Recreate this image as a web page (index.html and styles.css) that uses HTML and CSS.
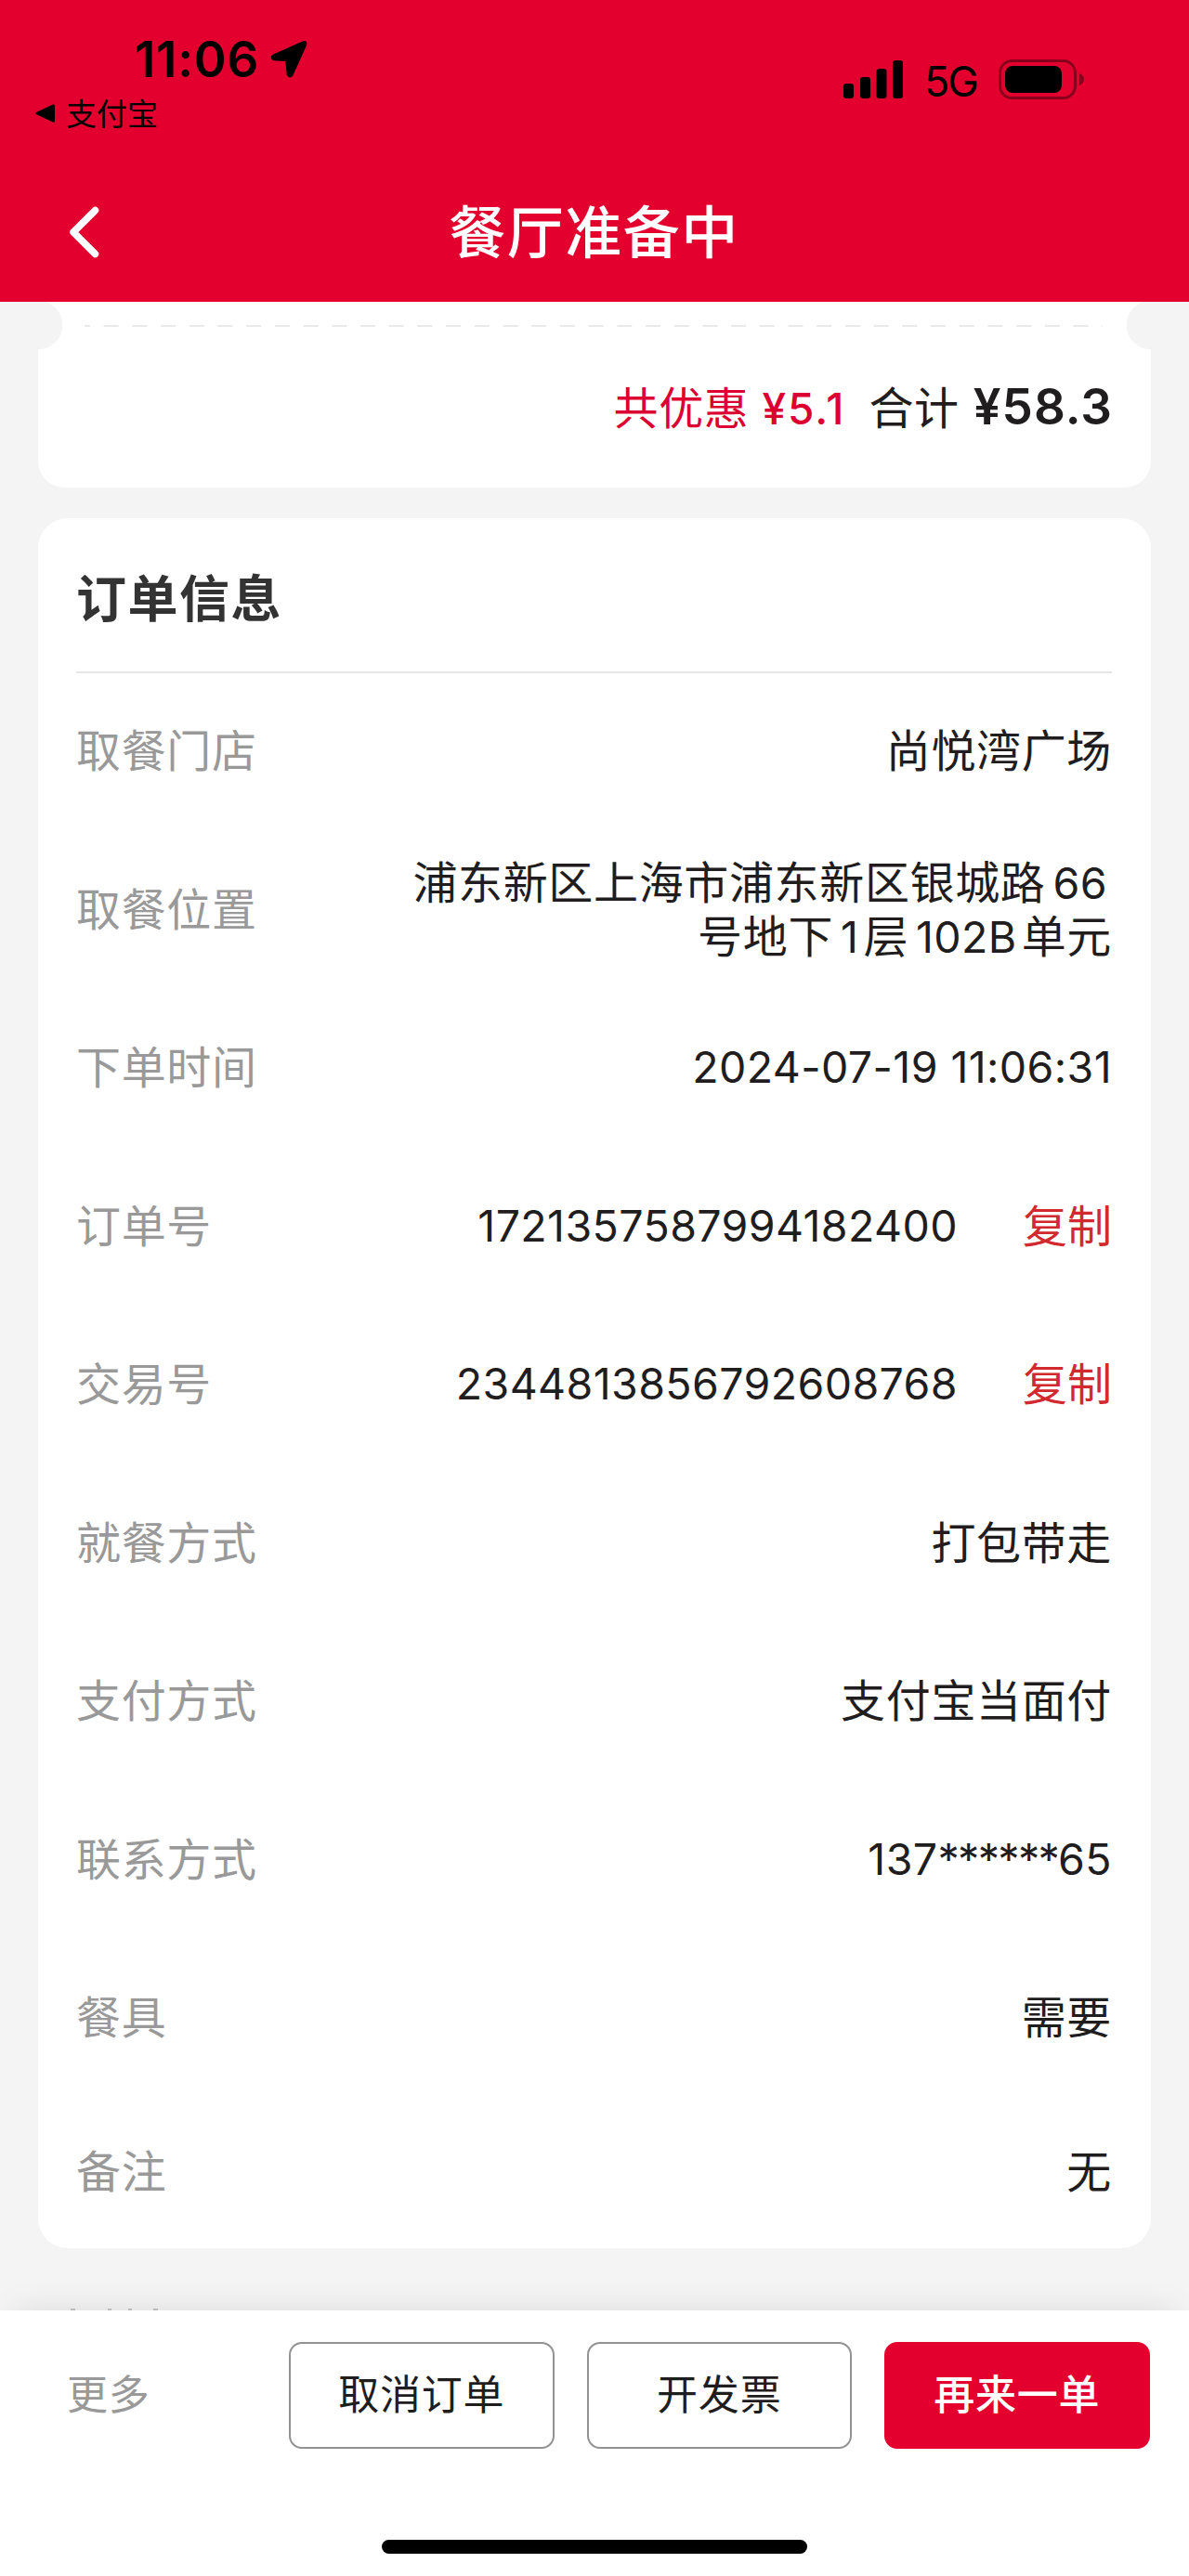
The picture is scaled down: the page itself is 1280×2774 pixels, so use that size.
FILE: index.html
```html
<!DOCTYPE html>
<html lang="zh-CN">
<head>
<meta charset="utf-8">
<title>餐厅准备中</title>
<link rel="stylesheet" href="styles.css">
</head>
<body>
<div class="screen">
  <header class="header">
    <div class="status">
      <div class="status-left">
        <div class="clock-row">
          <span class="clock">11:06</span>
          <svg class="location" viewBox="0 0 42 42"><path d="M36.8 2.6 4.2 17.2Q2 18.6 4.6 20.8L18.6 21.6 20.2 37.4Q21.8 40.4 24 37.8L38.8 4.8Q39.4 1.8 36.8 2.6Z" fill="#000" stroke="#000" stroke-width="3" stroke-linejoin="round"/></svg>
        </div>
        <div class="return-app">
          <svg class="triangle" viewBox="0 0 22 20"><path d="M19.5 1.8V18.2L2 10Z" fill="#000" stroke="#000" stroke-width="3" stroke-linejoin="round"/></svg>
          <span>支付宝</span>
        </div>
      </div>
      <div class="status-right">
        <svg class="signal" viewBox="0 0 64 41"><rect y="25" width="11" height="16" rx="3"/><rect x="18" y="18" width="11" height="23" rx="3"/><rect x="35.500" y="9" width="11" height="32" rx="3"/><rect x="53" width="11" height="41" rx="3"/></svg>
        <span class="network">5G</span>
        <svg class="battery" viewBox="0 0 93 43"><rect x="1.500" y="1.500" width="81" height="40" rx="13" fill="none" stroke="#000" stroke-opacity=".4" stroke-width="3"/><rect x="7" y="7" width="61" height="29" rx="8"/><path d="M87 15q5 2 5 6.500t-5 6.500Z" fill-opacity=".4"/></svg>
      </div>
    </div>
    <div class="navbar">
      <svg class="back" viewBox="0 0 34 56"><path d="M28.500 4.500 5 28 28.500 51.500" fill="none" stroke="#fff" stroke-width="7.500" stroke-linecap="round" stroke-linejoin="round"/></svg>
      <h1 class="title">餐厅准备中</h1>
    </div>
  </header>

  <main class="content">
    <section class="card summary">
      <svg class="dashes" viewBox="0 0 1096 2"><path d="M-10 1H1096" stroke="#e9e9e9" stroke-width="2" stroke-dasharray="16 14.700"/></svg>
      <div class="totals">
        <span class="saved">共优惠</span><span class="saved-amount">¥5.1</span><span class="total">合计</span><span class="total-amount">¥58.3</span>
      </div>
    </section>

    <section class="card info">
      <h2 class="info-title">订单信息</h2>
      <dl class="rows">
        <div class="row"><dt>取餐门店</dt><dd>尚悦湾广场</dd></div>
        <div class="row"><dt>取餐位置</dt><dd class="address">浦东新区上海市浦东新区银城路<span class="num in-text">66</span><br>号地下<span class="num in-text">1</span>层<span class="num in-text">102B</span>单元</dd></div>
        <div class="row"><dt>下单时间</dt><dd class="num">2024-07-19 11:06:31</dd></div>
        <div class="row"><dt>订单号</dt><dd class="num">1721357587994182400</dd><dd class="copy">复制</dd></div>
        <div class="row"><dt>交易号</dt><dd class="num">2344813856792608768</dd><dd class="copy">复制</dd></div>
        <div class="row"><dt>就餐方式</dt><dd>打包带走</dd></div>
        <div class="row"><dt>支付方式</dt><dd>支付宝当面付</dd></div>
        <div class="row"><dt>联系方式</dt><dd class="num">137<span class="mask">******</span>65</dd></div>
        <div class="row"><dt>餐具</dt><dd>需要</dd></div>
        <div class="row"><dt>备注</dt><dd>无</dd></div>
      </dl>
    </section>
    <svg class="next-peek" viewBox="0 0 98 2"><path d="M1 1h5M41 1h4M63 1h4M90 1h5" stroke="#c4c4c4" stroke-width="2"/></svg>
  </main>

  <footer class="footer">
    <div class="actions">
      <span class="more">更多</span>
      <button class="btn">取消订单</button>
      <button class="btn">开发票</button>
      <button class="btn primary">再来一单</button>
    </div>
    <div class="home-indicator"></div>
  </footer>
</div>
</body>
</html>
```
FILE: styles.css
```css
* { box-sizing: border-box; margin: 0; padding: 0; }

body {
  width: 1280px;
  background: #f4f4f4;
  color: #1f1d1e;
  font-family: "Noto Sans CJK SC", sans-serif;
  text-autospace: no-autospace;
}

svg { display: block; flex: none; }

.screen { display: flex; flex-direction: column; height: 2774px; overflow: hidden; }

.header { height: 325px; background: #e3002f; color: #000; flex: none; }
.status { display: flex; justify-content: space-between; height: 160px; padding: 32px 112px 0 38px; }
.status-left { display: flex; flex-direction: column; }
.clock-row { display: flex; align-items: center; height: 64px; padding-left: 107px; gap: 11px; }
.clock { width: 134px; font: 600 53px/64px Inter, sans-serif; letter-spacing: .7px; white-space: nowrap; }
.location { width: 42px; height: 42px; }
.return-app { display: flex; align-items: center; gap: 11px; height: 52px; font-size: 33px; line-height: 52px; }
.return-app span { padding-bottom: 3px; }
.triangle { width: 22px; height: 20px; }
.status-right { display: flex; align-items: flex-start; padding-top: 32px; }
.signal { width: 64px; height: 41px; margin-top: 1px; }
.network { width: 79px; height: 43px; padding-left: 23px; font: 400 45px/48px Inter, sans-serif; letter-spacing: -2px; }
.battery { width: 93px; height: 43px; margin-left: 24px; }

.navbar { display: grid; grid-template-columns: 1fr auto 1fr; align-items: center; height: 165px; padding: 0 75px 0 74px; }
.back { width: 34px; height: 56px; margin-top: 14px; }
.title { color: #fff; font-size: 61px; font-weight: 500; line-height: 88px; letter-spacing: 1.5px; margin-top: 9px; }

.content { flex: 1; min-height: 0; padding: 0 41px; overflow: hidden; }
.card { background: #fff; }
.summary {
  height: 200px;
  padding-top: 25px;
  border-radius: 0 0 28px 28px;
  background:
    radial-gradient(circle at 0 25px, #f4f4f4 26px, transparent 26.5px),
    radial-gradient(circle at 100% 25px, #f4f4f4 26px, transparent 26.5px),
    #fff;
}
.dashes { width: 1096px; height: 2px; margin-left: 50px; }
.totals { display: flex; justify-content: flex-end; align-items: baseline; padding: 45px 41px 0 0; font-size: 48px; line-height: 78px; letter-spacing: .65px; white-space: nowrap; }
.saved, .saved-amount { color: #dc0032; }
.saved-amount { margin: 0 25px 0 14px; font: 500 46px/1 Inter, sans-serif; letter-spacing: 2px; }
.total-amount { margin-left: 15px; font: 600 53px/1 Inter, sans-serif; letter-spacing: 1px; }

.info { height: 1863px; margin-top: 33px; padding: 0 42px 0 41px; border-radius: 32px; display: flex; flex-direction: column; }
.info-title { height: 167px; border-bottom: 2px solid #e6e6e6; color: #333; font-size: 54px; font-weight: 700; line-height: 168px; letter-spacing: 1.5px; flex: none; }
.rows { flex: 1; display: flex; flex-direction: column; font-size: 48px; line-height: 58px; letter-spacing: .65px; }
.row { display: flex; justify-content: flex-end; align-items: center; height: 170.5px; flex: none; }
.row:last-child { flex: 1; height: auto; }
.row dt, .row dd { padding-bottom: 10px; white-space: nowrap; }
.row dt { margin-right: auto; color: #999; }
.row dd { text-align: right; }
.row .num { padding-bottom: 4px; }
.num { font-family: Inter, sans-serif; font-size: 46.5px; letter-spacing: .4px; }
.mask { letter-spacing: -1.7px; }
.in-text { margin: 0 5px 0 8px; line-height: 1; }
.row .copy { margin-left: 70px; letter-spacing: 0; color: #d2292e; }

.next-peek { width: 98px; height: 2px; margin: 65px 0 0 34px; }

.footer { position: relative; flex: none; height: 286px; padding-top: 34px; background: #fff; box-shadow: 0 -16px 32px -16px rgba(0, 0, 0, .1); }
.actions { display: flex; align-items: center; gap: 35px; height: 115px; padding: 0 42.500px 0 72px; font-size: 44px; letter-spacing: .8px; }
.more { margin-right: auto; padding-bottom: 8px; color: #999; }
.btn { width: 285.500px; height: 115px; padding-bottom: 8px; border: 2px solid #929292; border-radius: 14px; background: #fff; color: #1f1d1e; font: inherit; letter-spacing: inherit; }
.primary { border-color: #e3002f; background: #e3002f; color: #fff; font-weight: 500; }
.home-indicator { width: 458px; height: 15px; margin: 98px auto 0; border-radius: 8px; background: #000; }
```
